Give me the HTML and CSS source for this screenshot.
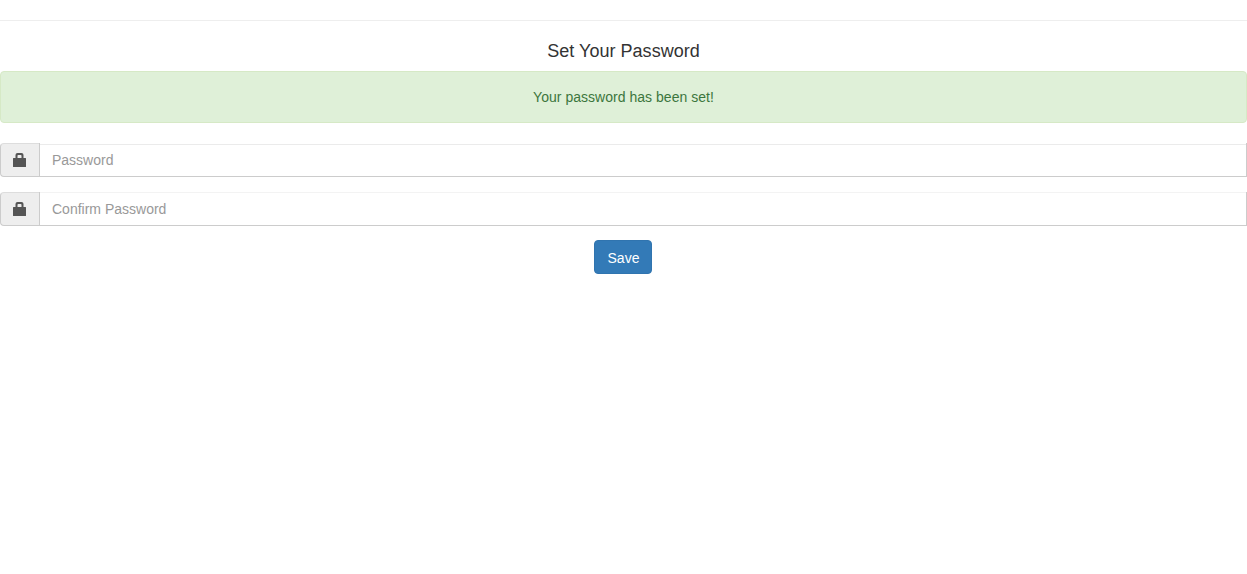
FILE: index.html
```html
<!DOCTYPE html>
<html lang="en">
<head>
<meta charset="utf-8">
<title>Set Your Password</title>
<link rel="stylesheet" href="styles.css">
</head>
<body>
<hr class="rule">
<h4 class="title">Set Your Password</h4>
<div class="alert">Your password has been set!</div>
<form class="form">
  <div class="input-group">
    <span class="addon"><svg class="lock" viewBox="0 0 14 14"><path fill-rule="evenodd" d="M2.500 5V2Q2.500 0 4.500 0H8.500Q10.500 0 10.500 2V5H12.500Q13 5 13 5.500V13.500Q13 14 12.500 14H.5Q0 14 0 13.500V5.500Q0 5 .5 5ZM4.500 5H8.500V2.700Q8.500 2 7.800 2H5.200Q4.500 2 4.500 2.700Z"/></svg></span>
    <input class="control" type="password" placeholder="Password">
  </div>
  <div class="input-group confirm">
    <span class="addon"><svg class="lock" viewBox="0 0 14 14"><path fill-rule="evenodd" d="M2.500 5V2Q2.500 0 4.500 0H8.500Q10.500 0 10.500 2V5H12.500Q13 5 13 5.500V13.500Q13 14 12.500 14H.5Q0 14 0 13.500V5.500Q0 5 .5 5ZM4.500 5H8.500V2.700Q8.500 2 7.800 2H5.200Q4.500 2 4.500 2.700Z"/></svg></span>
    <input class="control" type="password" placeholder="Confirm Password">
  </div>
  <button class="save" type="button">Save</button>
</form>
</body>
</html>
```
FILE: styles.css
```css
* { box-sizing: border-box; }
body { margin: 0; font: 14px/20px "Liberation Sans", Arial, sans-serif; color: #333; background: #fff; }
.rule { margin: 20px 0; border: 0; border-top: 1px solid #eee; }
.title { margin: 0 0 10px; font-size: 18px; line-height: 20px; font-weight: 400; letter-spacing: .03px; text-align: center; }
.alert { height: 52px; padding: 15px; margin-bottom: 20px; border: 1px solid #d6e9c6; border-radius: 4px; background: #dff0d8; color: #3c763d; letter-spacing: .03px; text-align: center; }
.form { display: flex; flex-direction: column; align-items: center; gap: 15px; }
.input-group { display: flex; width: 100%; height: 34px; }
.addon { display: flex; align-items: center; justify-content: center; width: 39px; border: 1px solid #ccc; border-right: 0; border-top-color: #ddd; border-radius: 4px 0 0 4px; background: #eee; }
.lock { width: 14px; height: 14px; fill: #555; }
.control { flex: 1; min-width: 0; padding: 7px 12px 6px; border: 1px solid #ccc; border-top: 0; border-radius: 0; background: linear-gradient(#ebebeb, #ebebeb) 0 1px / 100% 1px no-repeat #fff; font: inherit; color: #555; outline: 0; }
.confirm .control { background: linear-gradient(#f3f3f3, #f3f3f3) 0 0 / 100% 1px no-repeat #fff; }
.control::placeholder { color: #999; opacity: 1; }
.save { width: 58px; height: 34px; margin: -1px 1px 0 0; padding: 2px 0 0 1px; border: 1px solid #3074af; border-radius: 4px; background: #337ab7; color: #fff; font: inherit; }
```
